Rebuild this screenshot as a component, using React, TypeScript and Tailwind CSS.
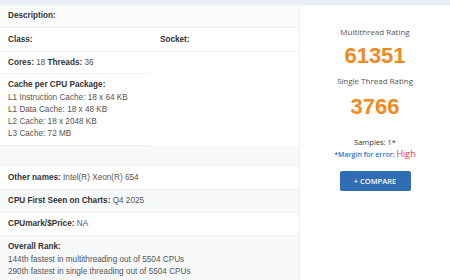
import React from "react";

const L = "font-['Liberation_Sans',Arial,sans-serif]";
const O = "font-['Open_Sans',sans-serif]";

function Lbl({ children }: { children: React.ReactNode }) {
  return <span className="font-bold text-[#333]">{children}</span>;
}

export default function App() {
  return (
    <div className={`w-[450px] h-[280px] overflow-hidden bg-white ${L} text-[8.2px] leading-[12px] text-[#555]`}>
      <div className="h-[5px] bg-[#e8eef5]" />
      <div className="flex">
        <div className="w-[300px] border-r border-[#eef0f3] shrink-0">
          <div className="h-[23px] flex items-center pl-[8px] bg-[#fafafb] border-b border-[#eef0f2]">
            <Lbl>Description:</Lbl>
          </div>
          <div className="h-[24px] flex items-center border-b border-[#eef0f2]">
            <div className="w-[152px] pl-[8px]">
              <Lbl>Class:</Lbl>
            </div>
            <div className="pl-[8px]">
              <Lbl>Socket:</Lbl>
            </div>
          </div>
          <div className="w-[150px]">
            <div className="h-[22px] flex items-center pl-[8px] border-b border-[#eef0f2]">
              <span>
                <Lbl>Cores:</Lbl> 18 <Lbl>Threads:</Lbl> 36
              </span>
            </div>
            <div className="pl-[8px] pt-[5px] pb-[5px] border-b border-[#eef0f2]">
              <div className="mb-[1px]">
                <Lbl>Cache per CPU Package:</Lbl>
              </div>
              <div>L1 Instruction Cache: 18 x 64 KB</div>
              <div>L1 Data Cache: 18 x 48 KB</div>
              <div>L2 Cache: 18 x 2048 KB</div>
              <div>L3 Cache: 72 MB</div>
            </div>
          </div>
          <div className="h-[20px] bg-[#f7f8fa] border-b border-[#eef0f2]" />
          <div className="h-[24px] flex items-center pl-[8px] border-b border-[#eef0f2]">
            <span>
              <Lbl>Other names:</Lbl> Intel(R) Xeon(R) 654
            </span>
          </div>
          <div className="h-[23px] flex items-center pl-[8px] bg-[#f7f8fa] border-b border-[#eef0f2]">
            <span>
              <Lbl>CPU First Seen on Charts:</Lbl> Q4 2025
            </span>
          </div>
          <div className="h-[23px] flex items-center pl-[8px] border-b border-[#eef0f2]">
            <span>
              <Lbl>CPUmark/$Price:</Lbl> NA
            </span>
          </div>
          <div className="pl-[8px] pt-[5px] pb-[10px] bg-[#f7f8fa]">
            <div className="mb-[1px]">
              <Lbl>Overall Rank:</Lbl>
            </div>
            <div>144th fastest in multithreading out of 5504 CPUs</div>
            <div>290th fastest in single threading out of 5504 CPUs</div>
          </div>
        </div>
        <div className={`flex-1 flex flex-col items-center ${O}`}>
          <div className="mt-[21px] text-[8px] leading-[11px] text-[#555]">Multithread Rating</div>
          <div className={`${L} font-bold text-[22px] leading-[24px] text-[#f28a1f] mt-[7px]`}>61351</div>
          <div className="mt-[7px] text-[8px] leading-[11px] text-[#555]">Single Thread Rating</div>
          <div className={`${L} font-bold text-[22px] leading-[24px] text-[#f28a1f] mt-[9px]`}>3766</div>
          <div className="mt-[18px] text-[7.5px] leading-[10px] text-[#333]">Samples: 1*</div>
          <div className="mt-[1px] text-[7px] leading-[12px]">
            <span className="text-[#2a77d8] font-semibold">*Margin for error: </span>
            <span className="text-[#e83a3a] text-[9px]">High</span>
          </div>
          <button className="mt-[10px] w-[71px] h-[20px] bg-[#2f6db5] rounded-[2px] text-white text-[7.5px] font-semibold flex items-center justify-center">
            + COMPARE
          </button>
        </div>
      </div>
    </div>
  );
}
